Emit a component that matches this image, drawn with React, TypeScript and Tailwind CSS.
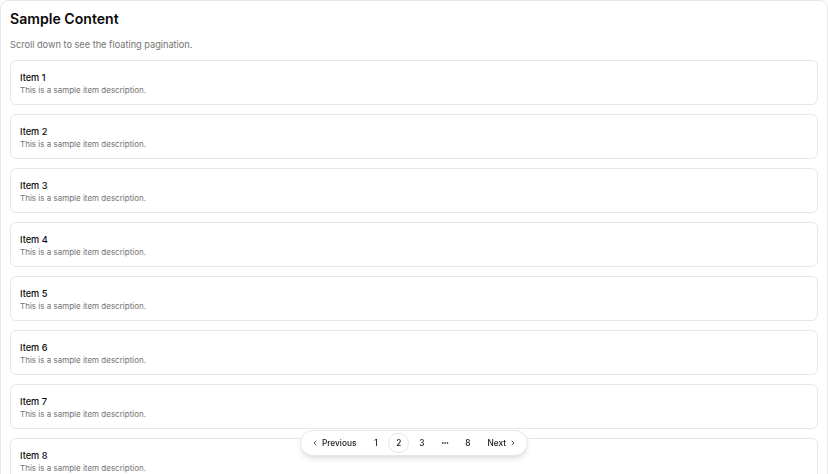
import React from 'react';
import { ChevronLeft, ChevronRight, MoreHorizontal } from 'lucide-react';

const items = Array.from({ length: 8 }, (_, i) => i + 1);

const Pagination: React.FC = () => {
  return (
    <nav className="fixed bottom-[18px] left-1/2 -translate-x-1/2 flex items-center gap-[2px] h-[26px] px-[3px] bg-white border border-gray-200 rounded-full shadow-md text-[8.3px] font-medium text-neutral-900">
      <button className="flex items-center gap-[3px] h-[20px] pl-[7px] pr-[7px] rounded-full">
        <ChevronLeft className="w-[8px] h-[8px]" strokeWidth={2.2} />
        <span>Previous</span>
      </button>
      <button className="w-[21px] h-[20px] flex items-center justify-center rounded-full">1</button>
      <button className="w-[21px] h-[20px] flex items-center justify-center rounded-full border border-gray-200 bg-white">2</button>
      <button className="w-[21px] h-[20px] flex items-center justify-center rounded-full">3</button>
      <span className="w-[21px] h-[20px] flex items-center justify-center">
        <MoreHorizontal className="w-[8px] h-[8px]" strokeWidth={2.4} />
      </span>
      <button className="w-[21px] h-[20px] flex items-center justify-center rounded-full">8</button>
      <button className="flex items-center gap-[3px] h-[20px] pl-[7px] pr-[7px] rounded-full">
        <span>Next</span>
        <ChevronRight className="w-[8px] h-[8px]" strokeWidth={2.2} />
      </button>
    </nav>
  );
};

const App: React.FC = () => {
  return (
    <div className="min-h-screen bg-white font-['Inter',sans-serif] text-neutral-950">
      <div className="border border-gray-200 rounded-lg px-[9px] pt-[9px] pb-[60px]">
        <h1 className="text-[14.1px] leading-[18px] font-semibold">Sample Content</h1>
        <p className="mt-[10px] text-[9.2px] leading-[14px] text-neutral-500">Scroll down to see the floating pagination.</p>
        <div className="mt-[8px] flex flex-col gap-[9px]">
          {items.map((n) => (
            <div key={n} className="h-[45px] border border-gray-200 rounded-md px-[9px] pt-[10px]">
              <div className="text-[9.2px] leading-[13px] font-medium">Item {n}</div>
              <div className="text-[8px] leading-[12px] text-neutral-500">This is a sample item description.</div>
            </div>
          ))}
        </div>
      </div>
      <Pagination />
    </div>
  );
};

export default App;
